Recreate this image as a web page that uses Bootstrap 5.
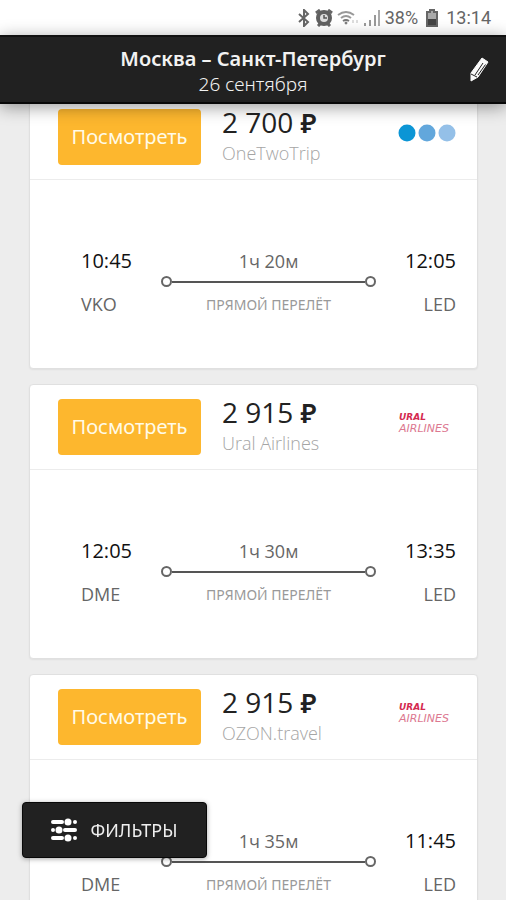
<!DOCTYPE html>
<html lang="ru">
<head>
<meta charset="utf-8">
<meta name="viewport" content="width=device-width, initial-scale=1">
<title>Москва – Санкт-Петербург</title>
<link href="https://cdn.jsdelivr.net/npm/bootstrap@5.3.0/dist/css/bootstrap.min.css" rel="stylesheet">
<style>
body { background: #ededed; color: #333; font-family: "Open Sans", "Noto Sans", sans-serif; }
.statusbar { height: 35px; color: #666; font: 400 18px/36px Roboto, sans-serif; padding-right: 15px; gap: 4px; }
.route-bar { height: 69px; background: #212121; color: #f2f2f2; border-top: 2px solid #111; border-bottom: 2px solid #080808; box-shadow: 0 3px 16px rgba(0,0,0,.4); z-index: 2; padding-top: 8px; }
.route-title { font-family: "Noto Sans", sans-serif; font-size: 20px; line-height: 27px; font-weight: 600; }
.route-date { font-family: "Noto Sans", sans-serif; font-size: 19px; line-height: 25px; font-weight: 300; }
.edit-btn { right: 14px; top: 18px; }
/* list scrolled slightly beneath the bar */
.results { margin-top: -10px; padding: 0 28px 0 29px; gap: 15px; }
.ticket { border: 1px solid #e0e0e0; border-radius: 4px; box-shadow: 0 1px 2px rgba(0,0,0,.06); }
.offer { height: 85px; padding: 0 21px 0 28px; border-bottom: 1px solid #ececec; }
.view-btn { width: 143px; height: 56px; background: #fdb72e; color: #fffbe8; border: 0; border-radius: 4px; font-family: "Noto Sans", sans-serif; font-size: 20px; padding: 0; }
.view-btn:hover { background: #f3ab1c; color: #fff; }
.quote { padding-left: 21px; }
.price { font-size: 28px; line-height: 32px; color: #222; }
.rub { font-weight: 600; font-size: 27px; }
.seller { font-size: 18px; line-height: 29px; font-weight: 300; color: #a5a5a5; }
.onetwotrip { margin-bottom: 8px; }
.flight { height: 188px; padding: 67px 21px 0 51px; }
.stop-box { width: 50px; }
.stop-end { display: flex; flex-direction: column; align-items: flex-end; }
.stop-time { font-size: 20px; line-height: 28px; min-height: 28px; color: #111; white-space: nowrap; }
.stop-code { font-size: 18px; line-height: 28px; margin-top: 15px; color: #666; }
.leg { margin: 0 30px; }
.leg-time { font-size: 18px; line-height: 29px; color: #666; }
.leg-note { font-family: "Noto Sans", sans-serif; font-size: 14px; line-height: 24px; margin-top: 6px; color: #999; }
.track-line { height: 2px; background: #555; }
.track-dot { width: 11px; height: 11px; border: 2px solid #666; border-radius: 50%; }
.ural { font: italic 700 9px/11px "DejaVu Sans", sans-serif; color: #d42a50; width: 57px; margin-bottom: 8px; }
.ural-sub { font-weight: 400; font-size: 11px; line-height: 11px; color: #dc7890; }
.filter-btn { left: 22px; bottom: 42px; width: 185px; height: 56px; background: #212121; color: #eee; border: 1px solid #080808; border-radius: 4px; font-family: "Noto Sans", sans-serif; font-size: 18px; gap: 13px; padding: 0 2px 0 0; z-index: 3; box-shadow: 0 1px 5px rgba(0,0,0,.35); }
.filter-btn:hover { background: #333; color: #fff; }
</style>
<script src="https://cdn.jsdelivr.net/npm/bootstrap@5.3.0/dist/js/bootstrap.bundle.min.js"></script>
</head>
<body>
<div class="vh-100 overflow-hidden d-flex flex-column">
  <div class="statusbar bg-white d-flex justify-content-end align-items-center flex-shrink-0">
    <svg width="16" height="18" viewBox="0 0 16 18" fill="none" stroke="#666" stroke-width="2"><path d="M4 5l9 8-4 4V1l4 4-9 8"/></svg>
    <svg width="18" height="18" viewBox="0 0 18 18"><path d="M1 4l4-3M13 1l4 3M3 17l3-3M15 17l-3-3" stroke="#666" stroke-width="3"/><circle cx="9" cy="9" r="8" fill="#606060"/><circle cx="9" cy="9" r="4" fill="#ddd"/><path d="M9 6v3h3" fill="none" stroke="#555" stroke-width="1.5"/></svg>
    <svg width="22" height="18" viewBox="0 0 22 18" fill="none" stroke="#999" stroke-width="2"><path d="M1 6q8-6 16 0M4 9q5-4 10 0"/><path d="M6 12q3-2 6 0" stroke="#777"/><circle cx="9" cy="14" r="1" fill="#777" stroke="#777" stroke-width="1"/><path d="M16 11v3M20 11v3" stroke="#ddd"/></svg>
    <svg width="18" height="18" viewBox="0 0 18 18" stroke="#999" stroke-width="2"><path d="M2 14v3M7 11v6M12 6v11"/><path d="M16 1v16" stroke="#aaa"/></svg>
    <span>38%</span>
    <svg class="mx-1" width="12" height="18" viewBox="0 0 12 18"><path d="M4 1h4v2h3v14H1V3h3z" fill="#aaa" stroke="#666" stroke-width="2"/><path d="M2 10h8v6H2z" fill="#444"/></svg>
    <span>13:14</span>
  </div>
  <header class="route-bar position-relative text-center flex-shrink-0">
    <h1 class="route-title m-0">Москва – Санкт-Петербург</h1>
    <div class="route-date">26 сентября</div>
    <button type="button" class="edit-btn btn p-0 border-0 position-absolute lh-1" aria-label="Изменить">
      <svg width="26" height="30" viewBox="0 0 26 30"><path d="M16 3l6 4-10 15-7 4 0-8z" fill="#fafafa" stroke="#fafafa" stroke-linejoin="round"/><path d="M17 8L9 20M19.500 9.500L12 20" stroke="#212121" stroke-width="1"/><path d="M5 19l6 3" stroke="#212121" stroke-width="1"/></svg>
    </button>
  </header>
  <main class="results d-flex flex-column">
    <article class="ticket bg-white">
      <div class="offer d-flex align-items-center">
        <button type="button" class="view-btn btn">Посмотреть</button>
        <div class="quote flex-grow-1"><div class="price">2 700 <span class="rub">₽</span></div><div class="seller">OneTwoTrip</div></div>
        <svg class="onetwotrip" width="58" height="18" viewBox="0 0 58 18" role="img" aria-label="OneTwoTrip"><circle cx="9" cy="9" r="8.5" fill="#0b95d5"/><circle cx="29" cy="9" r="8.5" fill="#62a7dc"/><circle cx="49" cy="9" r="8.5" fill="#94c0e8"/></svg>
      </div>
      <div class="flight d-flex">
        <div class="stop-box"><div class="stop-time">10:45</div><div class="stop-code">VKO</div></div>
        <div class="leg flex-grow-1 text-center"><div class="leg-time">1ч 20м</div><div class="d-flex align-items-center"><i class="track-dot"></i><i class="track-line flex-grow-1"></i><i class="track-dot"></i></div><div class="leg-note">ПРЯМОЙ ПЕРЕЛЁТ</div></div>
        <div class="stop-box stop-end"><div class="stop-time">12:05</div><div class="stop-code">LED</div></div>
      </div>
    </article>
    <article class="ticket bg-white">
      <div class="offer d-flex align-items-center">
        <button type="button" class="view-btn btn">Посмотреть</button>
        <div class="quote flex-grow-1"><div class="price">2 915 <span class="rub">₽</span></div><div class="seller">Ural Airlines</div></div>
        <div class="ural"><div>URAL</div><div class="ural-sub">AIRLINES</div></div>
      </div>
      <div class="flight d-flex">
        <div class="stop-box"><div class="stop-time">12:05</div><div class="stop-code">DME</div></div>
        <div class="leg flex-grow-1 text-center"><div class="leg-time">1ч 30м</div><div class="d-flex align-items-center"><i class="track-dot"></i><i class="track-line flex-grow-1"></i><i class="track-dot"></i></div><div class="leg-note">ПРЯМОЙ ПЕРЕЛЁТ</div></div>
        <div class="stop-box stop-end"><div class="stop-time">13:35</div><div class="stop-code">LED</div></div>
      </div>
    </article>
    <article class="ticket bg-white">
      <div class="offer d-flex align-items-center">
        <button type="button" class="view-btn btn">Посмотреть</button>
        <div class="quote flex-grow-1"><div class="price">2 915 <span class="rub">₽</span></div><div class="seller">OZON.travel</div></div>
        <div class="ural"><div>URAL</div><div class="ural-sub">AIRLINES</div></div>
      </div>
      <div class="flight d-flex">
        <div class="stop-box"><div class="stop-time"></div><div class="stop-code">DME</div></div>
        <div class="leg flex-grow-1 text-center"><div class="leg-time">1ч 35м</div><div class="d-flex align-items-center"><i class="track-dot"></i><i class="track-line flex-grow-1"></i><i class="track-dot"></i></div><div class="leg-note">ПРЯМОЙ ПЕРЕЛЁТ</div></div>
        <div class="stop-box stop-end"><div class="stop-time">11:45</div><div class="stop-code">LED</div></div>
      </div>
    </article>
  </main>
  <button type="button" class="filter-btn btn position-fixed d-flex align-items-center justify-content-center">
    <svg width="28" height="28" viewBox="0 0 28 28" stroke="#fff" stroke-width="4" stroke-linecap="round" fill="#fff"><path d="M3 6h9M25 6h0M3 14h0M15 14h10M3 22h9M25 22h0"/><g stroke="none"><circle cx="18" cy="6" r="3.5"/><circle cx="9" cy="14" r="3.5"/><circle cx="18" cy="22" r="3.5"/></g></svg>
    <span>ФИЛЬТРЫ</span>
  </button>
</div>
</body>
</html>
